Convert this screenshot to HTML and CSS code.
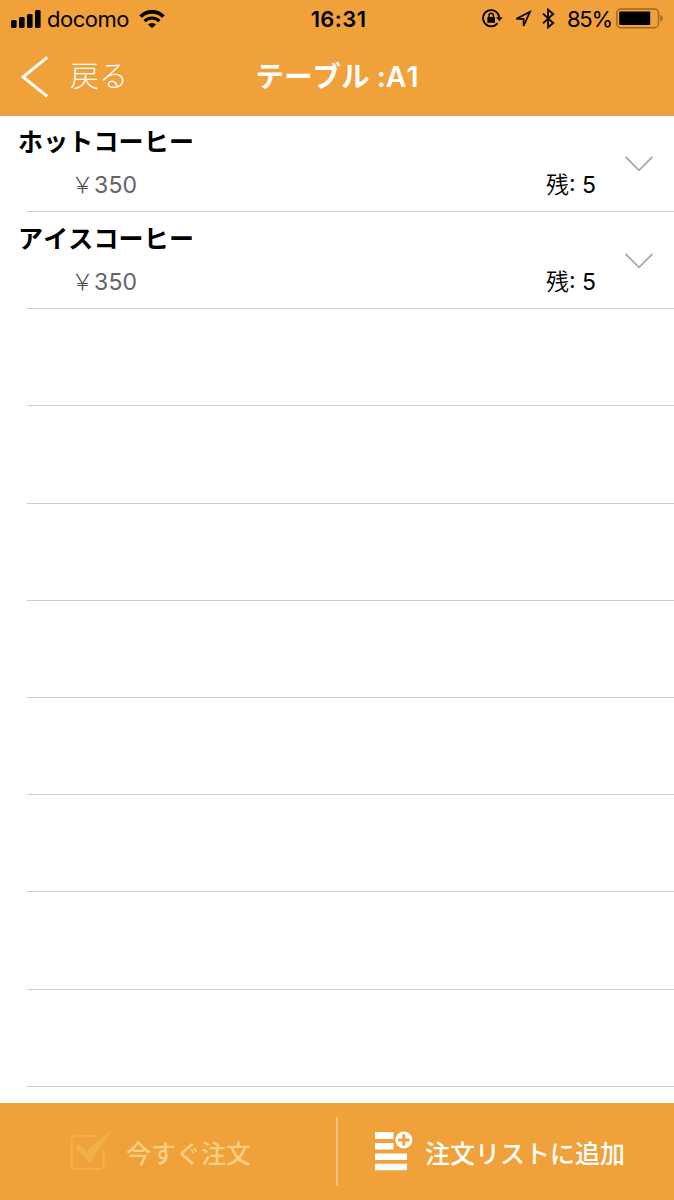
FILE: index.html
```html
<!DOCTYPE html>
<html lang="ja">
<head>
<meta charset="utf-8">
<title>テーブル :A1</title>
<link rel="stylesheet" href="styles.css">
</head>
<body>
<div class="screen">
  <header class="header">
    <div class="status">
      <div class="status-left">
        <svg class="signal" width="30" height="18" viewBox="0 0 30 18"><rect x="0" y="10" width="5.6" height="8" rx="1.5"/><rect x="8" y="7" width="5.6" height="11" rx="1.5"/><rect x="16" y="4" width="5.6" height="14" rx="1.5"/><rect x="24" y="0" width="5.6" height="18" rx="1.5"/></svg>
        <span class="carrier">docomo</span>
        <svg class="wifi" width="26" height="18" viewBox="0 0 26 18" fill="none" stroke="#000"><path d="M1.6 6.6A16.2 16.2 0 0 1 24.4 6.6" stroke-width="3.6"/><path d="M5.6 11.1A10.4 10.4 0 0 1 20.4 11.1" stroke-width="3.2"/><path d="M9 14.6A5.7 5.7 0 0 1 17 14.6L13 18Z" fill="#000" stroke="none"/></svg>
      </div>
      <span class="clock">16:31</span>
      <div class="status-right">
        <svg class="lock" width="21" height="19" viewBox="0 0 21 19"><path d="M15.6 14.1A8.1 8.1 0 1 1 17.2 8.2" fill="none" stroke="#000" stroke-width="1.8"/><path d="M14.1 8.2H20.6L17.4 12.2Z"/><rect x="5.4" y="8" width="7.6" height="5.8" rx=".6"/><path d="M7 8.3V6.5a2.2 2.2 0 0 1 4.4 0V8.3" fill="none" stroke="#000" stroke-width="1.4"/></svg>
        <svg class="arrow" width="18" height="18" viewBox="0 0 18 18"><path d="M2.4 8.8L16 1.9 9.6 15.8V8.8Z" fill="none" stroke="#000" stroke-width="1.7"/></svg>
        <svg class="bluetooth" width="13" height="21" viewBox="0 0 13 21"><path d="M1 5.6L11.2 15 6.1 19.4V1.6L11.2 6 1 15.4" fill="none" stroke="#000" stroke-width="1.8"/></svg>
        <span class="percent">85%</span>
        <svg class="battery" width="47" height="21" viewBox="0 0 47 21"><rect x=".8" y=".9" width="41.7" height="18.8" rx="4" fill="none" stroke="#9b6a29" stroke-width="1.5"/><rect x="3.2" y="3.6" width="31" height="13.3" rx="1"/><path d="M44.4 6.8Q46.8 8 46.8 10.2T44.4 13.7Z" fill="#9b6a29"/></svg>
      </div>
    </div>
    <nav class="nav">
      <div class="back">
        <svg width="28" height="42" viewBox="0 0 28 42"><path d="M26.2 1.4L2 21 26.2 40.4" fill="none" stroke="#fff" stroke-width="3"/></svg>
        <span>戻る</span>
      </div>
      <h1 class="title">テーブル :A1</h1>
    </nav>
  </header>
  <main class="list">
    <section class="row">
      <div class="name">ホットコーヒー</div>
      <div class="detail"><span class="price"><span class="yen">￥</span>350</span><span class="stock"><span class="stock-label">残</span>: 5</span></div>
      <svg class="chevron" width="28" height="16" viewBox="0 0 28 16"><path d="M.7 1L14 14.3 27.3 1"/></svg>
    </section>
    <section class="row">
      <div class="name">アイスコーヒー</div>
      <div class="detail"><span class="price"><span class="yen">￥</span>350</span><span class="stock"><span class="stock-label">残</span>: 5</span></div>
      <svg class="chevron" width="28" height="16" viewBox="0 0 28 16"><path d="M.7 1L14 14.3 27.3 1"/></svg>
    </section>
    <div class="row"></div><div class="row"></div><div class="row"></div><div class="row"></div>
    <div class="row"></div><div class="row"></div><div class="row"></div><div class="row"></div>
  </main>
  <footer class="footer">
    <div class="action order">
      <svg width="44" height="40" viewBox="0 0 44 40"><path d="M28.5 5.1H5.4a3.7 3.7 0 0 0-3.7 3.7V34.2A3.7 3.7 0 0 0 5.4 37.9H30a3.7 3.7 0 0 0 3.7-3.7V18.5" fill="none" stroke="#f3af49" stroke-width="2.2"/><path d="M4.5 16.2L8.8 13 17.2 20.7Q28 6.5 43.3 0 32 10.5 20.5 32.5Z" fill="#f3af49"/></svg>
      <span>今すぐ注文</span>
    </div>
    <div class="action add">
      <svg width="38" height="40" viewBox="0 0 38 40" fill="#fff"><path d="M0 1h18.5v7H0zM0 12h18.5v6.5H0zM0 22.4h32v6.5H0zM0 32.8h32v6.5H0z"/><circle cx="28.8" cy="9" r="8.5"/><path d="M28.8 3.3v11.4M23.1 9h11.4" stroke="#f0a13a" stroke-width="2.8"/></svg>
      <span>注文リストに追加</span>
    </div>
  </footer>
</div>
</body>
</html>
```
FILE: styles.css
```css
* { box-sizing: border-box; }
body { margin: 0; background: #fff; color: #000; font-family: Inter, "Noto Sans CJK JP", sans-serif; font-kerning: none; }
svg { display: block; flex: none; }
span { white-space: nowrap; }
.screen { width: 674px; height: 1200px; display: flex; flex-direction: column; overflow: hidden; }
.header { flex: none; height: 116px; background: #f0a13a; border-bottom: 1px solid #c9a77b; }
.status { height: 38px; display: grid; grid-template-columns: 1fr auto 1fr; align-items: center; font-size: 22px; line-height: 36px; }
.status-left { display: flex; align-items: center; padding-left: 11px; }
.carrier { margin-left: 6px; width: 83px; letter-spacing: -.5px; }
.wifi { margin-left: 9px; }
.clock { font-weight: 600; letter-spacing: .4px; padding-left: 3px; }
.status-right { display: flex; align-items: center; justify-content: flex-end; padding-right: 11px; }
.lock, .arrow, .bluetooth, .battery { margin-top: -1px; }
.arrow { margin-left: 11px; }
.bluetooth { margin-left: 10px; }
.percent { margin-left: 12px; width: 45px; letter-spacing: -1.3px; }
.battery { margin-left: 4px; }
.nav { height: 77px; display: grid; grid-template-columns: 1fr auto 1fr; align-items: center; color: #fff; }
.back { display: flex; align-items: center; gap: 21px; padding-left: 21px; font-size: 29px; font-weight: 300; line-height: 40px; }
.back span { padding-top: 1px; }
.title { margin: 0; font-size: 28.5px; font-weight: 600; line-height: 40px; }
.list { flex: none; height: 987px; }
.row { height: 97.2px; margin-left: 27px; border-bottom: 1px solid #cfcfd1; display: grid; grid-template-columns: 569px 28px; grid-template-rows: 50px 37px; column-gap: 29px; }
.row:first-child { height: 96px; }
.row:first-child .name { padding-top: 9px; }
.row:first-child .chevron { margin-top: 9px; }
.row:first-child .detail { margin-top: -4px; }
.name { margin-left: -9px; padding-top: 10px; font-size: 25px; line-height: 34px; font-weight: 700; letter-spacing: .15px; }
.detail { grid-row: 2; margin-top: -2px; display: flex; justify-content: space-between; align-items: center; font-size: 23px; }
.price { color: #646464; margin-left: 44px; font-weight: 400; letter-spacing: .1px; }
.yen { font-weight: 300; color: #505050; }
.stock { font-size: 23px; }
.stock-label { font-weight: 350; }
.chevron { grid-column: 2; grid-row: 1 / 3; align-self: center; margin-top: 11px; fill: none; stroke: #aaa; stroke-width: 1.8; }
.footer { flex: none; height: 97px; background: #f0a13a; display: flex; font-size: 25px; font-weight: 500; }
.action { flex: none; width: 337px; display: flex; align-items: center; }
.order { padding-left: 70px; gap: 12px; color: #f8cf83; position: relative; }
.order::after { content: ""; position: absolute; right: -1px; top: 14px; width: 2px; height: 69px; background: #f6c681; }
.add { padding-left: 38px; gap: 12px; color: #fff; }
.action svg { margin-top: -1px; }
```
